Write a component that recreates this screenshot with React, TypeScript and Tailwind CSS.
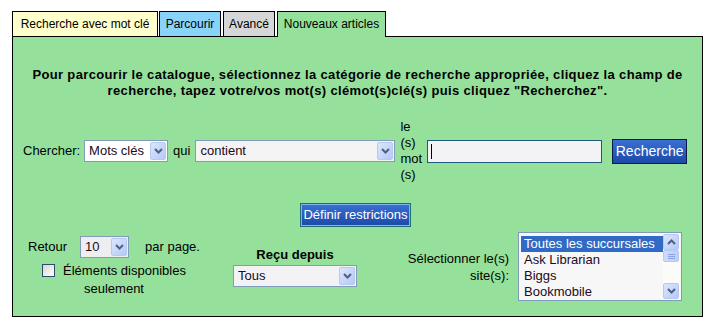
import React from "react";

const FONT = "font-['Liberation_Sans',Arial,sans-serif]";

function Chevron({ up = false }: { up?: boolean }) {
  return (
    <svg width="9" height="6" viewBox="0 0 9 6">
      <path
        d={up ? "M1 5 L4.5 1.5 L8 5" : "M1 1 L4.5 4.5 L8 1"}
        fill="none"
        stroke="#4d6185"
        strokeWidth="2"
      />
    </svg>
  );
}

function ArrowBtn({ up = false }: { up?: boolean }) {
  return (
    <div className="flex w-[16px] items-center justify-center rounded-[2px] border border-[#b7c9ef] bg-gradient-to-br from-[#dce6fd] to-[#b5c9f6]">
      <Chevron up={up} />
    </div>
  );
}

function Select({
  value,
  className,
}: {
  value: string;
  className: string;
}) {
  return (
    <div
      className={`flex h-[22px] items-stretch border border-[#7f9db9] p-px ${className}`}
    >
      <span className="flex-1 px-[3px] text-[13px] leading-[18px] text-[#220a1a]">
        {value}
      </span>
      <ArrowBtn />
    </div>
  );
}

export default function App() {
  return (
    <div className={`h-[331px] w-[715px] bg-white text-black ${FONT}`}>
      {/* Tabs */}
      <div className="flex items-end gap-[2px] pl-[12px] pt-[11px]">
        <div className="flex h-[25px] w-[146px] items-center justify-center border border-b-0 border-black bg-[#ffffcc] text-[12px]">
          Recherche avec mot clé
        </div>
        <div className="-ml-[1px] flex h-[25px] w-[62px] items-center justify-center border border-b-0 border-black bg-[#88d3f7] text-[12px]">
          Parcourir
        </div>
        <div className="flex h-[25px] w-[52px] items-center justify-center border border-b-0 border-black bg-[#d6d6d6] text-[12px]">
          Avancé
        </div>
        <div className="relative z-10 -mb-px flex h-[26px] w-[109px] items-center justify-center border border-b-0 border-black bg-[#95e09b] pb-px text-[12px]">
          Nouveaux articles
        </div>
      </div>

      {/* Panel */}
      <div className="ml-[12px] flex h-[281px] w-[691px] flex-col border border-black bg-[#95e09b] pt-[30px]">
        <p className="text-center text-[13px] font-bold leading-[16px] tracking-[0.35px]">
          Pour parcourir le catalogue, sélectionnez la catégorie de recherche
          appropriée, cliquez la champ de
          <br />
          recherche, tapez votre/vos mot(s) clémot(s)clé(s) puis cliquez
          "Recherchez".
        </p>

        {/* Search row */}
        <div className="mt-[20px] flex items-center pl-[10px] text-[13px]">
          <span>Chercher:</span>
          <Select value="Mots clés" className="ml-[4px] w-[84px] bg-white" />
          <span className="ml-[5px]">qui</span>
          <Select value="contient" className="ml-[5px] w-[200px] bg-[#f4f4f4]" />
          <div className="ml-[5px] flex flex-col leading-[16px]">
            <span>le</span>
            <span>(s)</span>
            <span>mot</span>
            <span>(s)</span>
          </div>
          <div className="ml-[5px] flex h-[23px] w-[175px] items-center border border-[#1d5a7e] bg-[#f3f3f5] px-[3px]">
            <span className="h-[15px] w-px bg-black" />
          </div>
          <button className="ml-[10px] h-[25px] w-[75px] border border-[#0b1b3d] bg-gradient-to-b from-[#3a6fd3] to-[#1b4aa8] text-[14px] text-white">
            Recherche
          </button>
        </div>

        {/* Restrictions */}
        <div className="mt-[20px] flex justify-center pr-[4px]">
          <button className="h-[24px] w-[111px] border border-[#1f6f78] bg-gradient-to-b from-[#3a6fd3] to-[#1b4aa8] text-[13px] text-white shadow-[inset_0_0_0_1px_#7fb6e8]">
            Définir restrictions
          </button>
        </div>

        {/* Options row */}
        <div className="mt-[5px] flex items-center pl-[15px] text-[13px]">
          <div className="flex w-[172px] flex-col items-center">
            <div className="flex w-full items-center">
              <span>Retour</span>
              <Select value="10" className="ml-[13px] h-[21px] w-[49px] bg-[#eeeef0]" />
              <span className="ml-[16px]">par page.</span>
            </div>
            <div className="mt-[4px] text-center leading-[18px]">
              <span className="mr-[8px] inline-block h-[13px] w-[13px] translate-y-[2px] border border-[#2f4b6b] bg-gradient-to-br from-[#d6d6d0] to-white" />
              Éléments disponibles
              <br />
              seulement
            </div>
          </div>

          <div className="ml-[33px] flex w-[124px] flex-col items-center">
            <span className="font-bold leading-[16px]">Reçu depuis</span>
            <Select value="Tous" className="mt-[2px] h-[21px] w-[124px] bg-[#f3f3f5]" />
          </div>

          <div className="ml-[42px] w-[110px] text-right leading-[17px]">
            Sélectionner le(s)
            <br />
            site(s):
          </div>

          <div className="ml-[9px] flex h-[69px] w-[164px] border border-[#7f9db9] bg-[#f7f7f7] p-px">
            <ul className="flex-1 pl-px pt-[2px] text-[13px] leading-[16px] text-[#220a1a]">
              <li className="bg-[#316ac5] pl-[3px] text-white">
                Toutes les succursales
              </li>
              <li className="pl-[3px]">Ask Librarian</li>
              <li className="pl-[3px]">Biggs</li>
              <li className="pl-[3px]">Bookmobile</li>
            </ul>
            <div className="flex w-[17px] flex-col bg-[#fbfbf8]">
              <div className="flex h-[16px]">
                <ArrowBtn up />
              </div>
              <div className="flex h-[12px] w-[16px] flex-col items-center justify-center gap-px rounded-[2px] border border-[#b7c9ef] bg-gradient-to-r from-[#cddbfc] to-[#bccff8]">
                <span className="h-px w-[7px] bg-[#8aa4e0]" />
                <span className="h-px w-[7px] bg-[#8aa4e0]" />
                <span className="h-px w-[7px] bg-[#8aa4e0]" />
              </div>
              <div className="flex-1" />
              <div className="flex h-[16px]">
                <ArrowBtn />
              </div>
            </div>
          </div>
        </div>
      </div>
    </div>
  );
}
